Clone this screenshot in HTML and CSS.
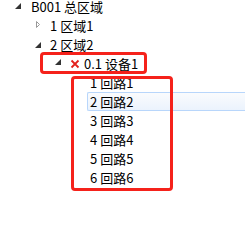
FILE: index.html
```html
<!DOCTYPE html>
<html>
<head>
  <title>区域树</title>
  <link rel="stylesheet" href="styles.css">
</head>
<body>
  <div class="tree">
    <div class="row lv0">
      <span class="toggle"><svg width="16" height="16" viewBox="0 3 16 16"><path d="M11 6V12H5Z" class="open"/></svg></span>
      <span class="head">B001 总区域</span>
    </div>
    <div class="row lv1">
      <span class="toggle"><svg width="16" height="19" viewBox="0 0 16 19"><path d="M7.5 5.5L10.5 8.5L7.5 11.5Z" class="closed"/></svg></span>
      <span class="head">1 区域1</span>
    </div>
    <div class="row lv1">
      <span class="toggle"><svg width="16" height="19" viewBox="0 0 16 19"><path d="M12 7V13H6Z" class="open"/></svg></span>
      <span class="head">2 区域2</span>
    </div>
    <div class="row lv2">
      <span class="toggle"><svg width="16" height="19" viewBox="0 0 16 19"><path d="M12 5V11H6Z" class="open"/></svg></span>
      <span class="head">
        <svg class="fault" width="10" height="10" viewBox="0 0 10 10"><path d="M1.5 1.5L8.5 8.5M8.5 1.5L1.5 8.5"/></svg>0.1 设备1
      </span>
    </div>
    <div class="row lv3"><span class="toggle"></span><span class="head">1 回路1</span></div>
    <div class="row lv3"><span class="toggle"></span><span class="head selected">2 回路2</span></div>
    <div class="row lv3"><span class="toggle"></span><span class="head">3 回路3</span></div>
    <div class="row lv3"><span class="toggle"></span><span class="head">4 回路4</span></div>
    <div class="row lv3"><span class="toggle"></span><span class="head">5 回路5</span></div>
    <div class="row lv3"><span class="toggle"></span><span class="head">6 回路6</span></div>
  </div>

  <!-- red annotation frames drawn over the tree -->
  <div class="mark mark-device"></div>
  <div class="mark mark-loops"></div>
</body>
</html>
```

FILE: styles.css
```css
body {
  margin: 0;
  background: #fff;
  font-family: "Noto Sans CJK SC", "Liberation Sans", sans-serif;
  font-size: 13px;
  color: #000;
}
.tree {
  width: 245px;
}
.row {
  display: flex;
  height: 19px;
}
/* the top row is scrolled 3px out of view */
.row.lv0 {
  height: 16px;
}
.lv1 {
  padding-left: 19px;
}
.lv2 {
  padding-left: 39px;
}
.lv3 {
  padding-left: 59px;
}
.toggle {
  width: 16px;
  margin-left: 10px;
  flex-shrink: 0;
}
.toggle svg {
  display: block;
}
.open {
  fill: #333;
}
.closed {
  fill: #fff;
  stroke: #999;
  stroke-width: 1;
}
.head {
  display: flex;
  align-items: center;
  box-sizing: border-box;
  height: 19px;
  margin-left: 2px;
  padding: 0 2px;
  border: 1px solid transparent;
  border-radius: 2px;
  line-height: 17px;
  white-space: nowrap;
}
.lv0 .head {
  align-items: flex-start;
  height: 16px;
  border-top: 0;
  line-height: 13px;
}
.head.selected {
  flex: 1;
  border-color: #b8d6fb;
  border-right: 0;
  border-radius: 2px 0 0 2px;
  background: linear-gradient(#fafbfd, #ebf3fd);
}
.fault {
  margin: 0 4px 0 0;
  stroke: #e3211c;
  stroke-width: 1.8;
}
.mark {
  position: absolute;
  border: 3px solid #f5221b;
  border-radius: 4px;
  box-sizing: border-box;
}
.mark-device {
  left: 40px;
  top: 52px;
  width: 107px;
  height: 22px;
}
.mark-loops {
  left: 71px;
  top: 76px;
  width: 102px;
  height: 115px;
}
```
